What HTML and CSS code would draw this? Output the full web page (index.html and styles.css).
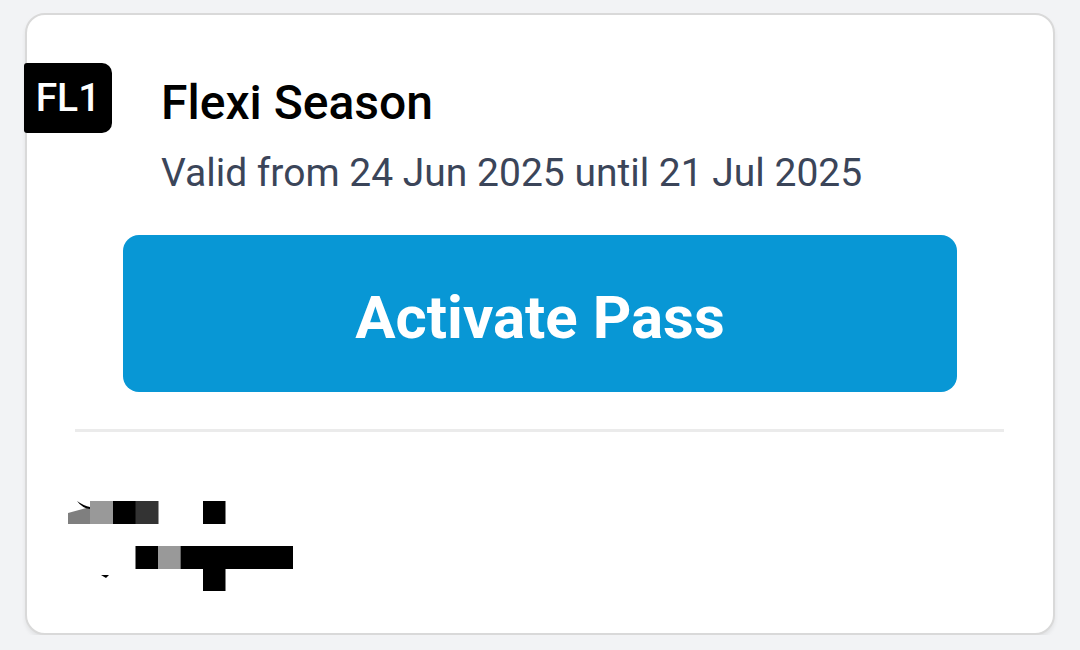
FILE: index.html
```html
<!DOCTYPE html>
<html lang="en">
<head>
<meta charset="utf-8">
<title>Flexi Season</title>
<link rel="stylesheet" href="styles.css">
</head>
<body>
<div class="card">
  <div class="head">
    <div class="badge">FL1</div>
    <div class="info">
      <div class="title">Flexi Season</div>
      <div class="valid">Valid from 24 Jun 2025 until 21 Jul 2025</div>
    </div>
  </div>
  <button class="activate">Activate Pass</button>
  <div class="divider"></div>
  <svg class="pix" width="240" height="110" viewBox="60 490 240 110" aria-hidden="true">
    <polygon points="68,514 90,508 90,525 68,525" fill="#7f7f7f"/>
    <path d="M77,502 Q84,507 90,508 L90,510 Q82,509 77,502 Z" fill="#000"/>
    <rect x="90" y="502" width="23" height="23" fill="#999"/>
    <rect x="113" y="502" width="23" height="23" fill="#000"/>
    <rect x="135.5" y="502" width="23" height="23" fill="#333"/>
    <rect x="203" y="502" width="22.5" height="23" fill="#000"/>
    <rect x="135.5" y="547" width="23" height="23" fill="#000"/>
    <rect x="158" y="547" width="22.5" height="23" fill="#999"/>
    <rect x="180.5" y="547" width="112.5" height="23" fill="#000"/>
    <rect x="203" y="569" width="22.5" height="23" fill="#000"/>
    <polygon points="101,576 109,576 106,579" fill="#000"/>
  </svg>
</div>
</body>
</html>
```

FILE: styles.css
```css
html, body {
  margin: 0;
  padding: 0;
  background: #f2f3f5;
  font-family: Roboto, "Liberation Sans", sans-serif;
}

.card {
  box-sizing: border-box;
  margin: 13px 0 0 25px;
  width: 1030px;
  height: 622px;
  background: #ffffff;
  border: 2px solid #d9d9d9;
  border-radius: 20px;
  box-shadow: 0 3px 4px rgba(0, 0, 0, 0.07);
  display: flex;
  flex-direction: column;
  align-items: flex-start;
}

.head {
  display: flex;
  align-items: flex-start;
  margin-top: 48px;
}

.badge {
  margin-left: -3px;
  width: 88px;
  height: 70px;
  background: #000;
  color: #fff;
  border-radius: 3px 10px 10px 3px;
  display: flex;
  align-items: center;
  justify-content: center;
  font-size: 39px;
  font-weight: 500;
}

.info {
  margin-left: 49px;
  padding-top: 12px;
  display: flex;
  flex-direction: column;
}

.title {
  font-size: 48px;
  font-weight: 500;
  line-height: 56px;
  color: #000;
}

.valid {
  margin-top: 19px;
  font-size: 39px;
  line-height: 46px;
  color: #3b4559;
}

.activate {
  margin: 39px 0 0 96px;
  width: 834px;
  height: 157px;
  border: none;
  border-radius: 16px;
  background: #0897d5;
  color: #fff;
  font-family: Roboto, "Liberation Sans", sans-serif;
  font-size: 60px;
  font-weight: 700;
  padding: 8px 0 0 0;
}

.divider {
  margin: 37px 0 0 48px;
  width: 929px;
  height: 3px;
  background: #ebebeb;
}

.pix {
  display: block;
  margin: 57px 0 0 33px;
}
```
